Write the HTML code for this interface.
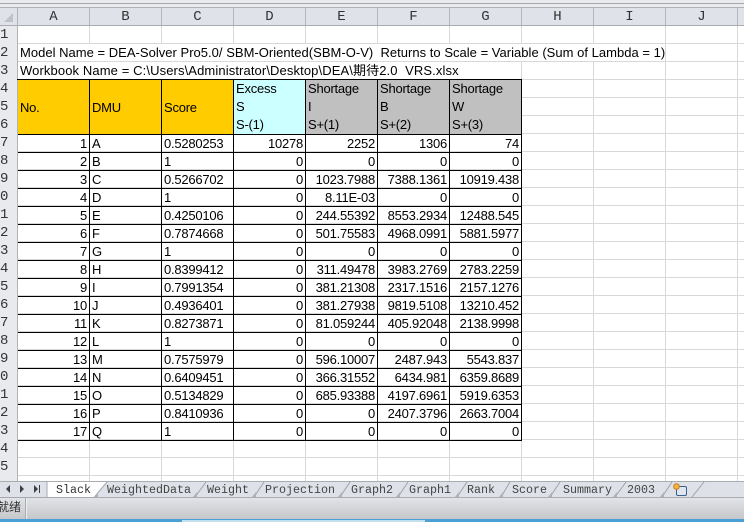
<!DOCTYPE html>
<html><head><meta charset="utf-8"><style>
html,body{margin:0;padding:0;width:744px;height:522px;overflow:hidden;background:#fff}
body{position:relative;font-family:"Liberation Sans","Noto Sans CJK SC",sans-serif;font-size:13px;color:#000}
div{position:absolute}
.ch{top:8px;height:17px;line-height:18px;width:71px;text-align:center;font-family:"Liberation Mono",monospace;font-size:14px;color:#333;border-right:1px solid #b4b8bc}
.rn{left:0;width:17px;height:18px;line-height:18px;font-family:"Liberation Mono",monospace;font-size:14px;color:#333;overflow:hidden}
.t{white-space:pre;left:18px;padding-left:2px;height:17px;line-height:18px;background:#fff;overflow:visible}
table{position:absolute;left:18px;top:80px;border-collapse:separate;border-spacing:0;table-layout:fixed;width:504px}
td{box-sizing:border-box;width:72px;height:18px;padding:0 2px;border-right:1px solid #000;border-bottom:1px solid #000;line-height:17px;white-space:nowrap;overflow:hidden;text-align:left;font-size:13px;letter-spacing:-.23px}
td.r{text-align:right}
.y{background:#fc0}.c{background:#cff}.g{background:#c0c0c0}
.h{height:54px;vertical-align:middle}
.m{vertical-align:top;line-height:18px}
.tb{top:482px;height:15px;line-height:16px;font-family:"Liberation Mono",monospace;font-size:11.67px;color:#444;white-space:pre}
svg{position:absolute}
</style></head><body>
<div style="left:0;top:0;width:744px;height:8px;background:#e9ebef"></div>
<div style="left:0;top:3px;width:744px;height:1px;background:#a8a8a8"></div>
<div style="left:0;top:7px;width:744px;height:1px;background:#aeb2b6"></div>
<div style="left:0;top:8px;width:744px;height:17px;background:#dfe2e8"></div>
<div style="left:0;top:25px;width:744px;height:1px;background:#a9adb2"></div>
<div style="left:0;top:26px;width:17px;height:455px;background:#e8eaee"></div>
<div style="left:17px;top:8px;width:1px;height:473px;background:#b0b4b8"></div>
<svg style="left:0;top:8px" width="17" height="17"><path d="M13 5V14H4Z" fill="#bfc3c6"/></svg>
<div style="left:18px;top:26px;width:726px;height:455px;background-image:linear-gradient(to right,transparent 71px,#d8d8d8 71px),linear-gradient(to bottom,transparent 17px,#d8d8d8 17px);background-size:72px 18px"></div>
<div class="ch" style="left:18px">A</div><div class="ch" style="left:90px">B</div><div class="ch" style="left:162px">C</div><div class="ch" style="left:234px">D</div><div class="ch" style="left:306px">E</div><div class="ch" style="left:378px">F</div><div class="ch" style="left:450px">G</div><div class="ch" style="left:522px">H</div><div class="ch" style="left:594px">I</div><div class="ch" style="left:666px">J</div><div class="ch" style="left:738px;width:6px;border:0"></div>
<div class="rn" style="top:26px">1</div><div class="rn" style="top:44px">2</div><div class="rn" style="top:62px">3</div><div class="rn" style="top:80px">4</div><div class="rn" style="top:98px">5</div><div class="rn" style="top:116px">6</div><div class="rn" style="top:134px">7</div><div class="rn" style="top:152px">8</div><div class="rn" style="top:170px">9</div><div class="rn" style="top:188px">0</div><div class="rn" style="top:206px">1</div><div class="rn" style="top:224px">2</div><div class="rn" style="top:242px">3</div><div class="rn" style="top:260px">4</div><div class="rn" style="top:278px">5</div><div class="rn" style="top:296px">6</div><div class="rn" style="top:314px">7</div><div class="rn" style="top:332px">8</div><div class="rn" style="top:350px">9</div><div class="rn" style="top:368px">0</div><div class="rn" style="top:386px">1</div><div class="rn" style="top:404px">2</div><div class="rn" style="top:422px">3</div><div class="rn" style="top:440px">4</div><div class="rn" style="top:458px">5</div>
<div class="t" style="top:44px;width:645px;letter-spacing:.02px">Model Name = DEA-Solver Pro5.0/ SBM-Oriented(SBM-O-V)  Returns to Scale = Variable (Sum of Lambda = 1)</div>
<div class="t" style="top:62px;width:500px;letter-spacing:.11px">Workbook Name = C:\Users\Administrator\Desktop\DEA\期待2.0  VRS.xlsx</div>
<div style="left:17px;top:79px;width:505px;height:1px;background:#000"></div>
<table>
<tr><td rowspan="3" class="y h">No.</td><td rowspan="3" class="y h">DMU</td><td rowspan="3" class="y h">Score</td><td rowspan="3" class="c h m">Excess<br>S<br>S-(1)</td><td rowspan="3" class="g h m">Shortage<br>I<br>S+(1)</td><td rowspan="3" class="g h m">Shortage<br>B<br>S+(2)</td><td rowspan="3" class="g h m">Shortage<br>W<br>S+(3)</td></tr>
<tr></tr><tr></tr>
<tr><td class="r">1</td><td>A</td><td>0.5280253</td><td class="r">10278</td><td class="r">2252</td><td class="r">1306</td><td class="r">74</td></tr>
<tr><td class="r">2</td><td>B</td><td>1</td><td class="r">0</td><td class="r">0</td><td class="r">0</td><td class="r">0</td></tr>
<tr><td class="r">3</td><td>C</td><td>0.5266702</td><td class="r">0</td><td class="r">1023.7988</td><td class="r">7388.1361</td><td class="r">10919.438</td></tr>
<tr><td class="r">4</td><td>D</td><td>1</td><td class="r">0</td><td class="r">8.11E-03</td><td class="r">0</td><td class="r">0</td></tr>
<tr><td class="r">5</td><td>E</td><td>0.4250106</td><td class="r">0</td><td class="r">244.55392</td><td class="r">8553.2934</td><td class="r">12488.545</td></tr>
<tr><td class="r">6</td><td>F</td><td>0.7874668</td><td class="r">0</td><td class="r">501.75583</td><td class="r">4968.0991</td><td class="r">5881.5977</td></tr>
<tr><td class="r">7</td><td>G</td><td>1</td><td class="r">0</td><td class="r">0</td><td class="r">0</td><td class="r">0</td></tr>
<tr><td class="r">8</td><td>H</td><td>0.8399412</td><td class="r">0</td><td class="r">311.49478</td><td class="r">3983.2769</td><td class="r">2783.2259</td></tr>
<tr><td class="r">9</td><td>I</td><td>0.7991354</td><td class="r">0</td><td class="r">381.21308</td><td class="r">2317.1516</td><td class="r">2157.1276</td></tr>
<tr><td class="r">10</td><td>J</td><td>0.4936401</td><td class="r">0</td><td class="r">381.27938</td><td class="r">9819.5108</td><td class="r">13210.452</td></tr>
<tr><td class="r">11</td><td>K</td><td>0.8273871</td><td class="r">0</td><td class="r">81.059244</td><td class="r">405.92048</td><td class="r">2138.9998</td></tr>
<tr><td class="r">12</td><td>L</td><td>1</td><td class="r">0</td><td class="r">0</td><td class="r">0</td><td class="r">0</td></tr>
<tr><td class="r">13</td><td>M</td><td>0.7575979</td><td class="r">0</td><td class="r">596.10007</td><td class="r">2487.943</td><td class="r">5543.837</td></tr>
<tr><td class="r">14</td><td>N</td><td>0.6409451</td><td class="r">0</td><td class="r">366.31552</td><td class="r">6434.981</td><td class="r">6359.8689</td></tr>
<tr><td class="r">15</td><td>O</td><td>0.5134829</td><td class="r">0</td><td class="r">685.93388</td><td class="r">4197.6961</td><td class="r">5919.6353</td></tr>
<tr><td class="r">16</td><td>P</td><td>0.8410936</td><td class="r">0</td><td class="r">0</td><td class="r">2407.3796</td><td class="r">2663.7004</td></tr>
<tr><td class="r">17</td><td>Q</td><td>1</td><td class="r">0</td><td class="r">0</td><td class="r">0</td><td class="r">0</td></tr>
</table>
<!-- tab strip -->
<div style="left:0;top:481px;width:744px;height:1px;background:#a9adb2"></div>
<div style="left:0;top:482px;width:744px;height:15px;background:#dee1e8"></div>
<div style="left:0;top:497px;width:744px;height:1px;background:#a9adb2"></div>
<svg style="left:0;top:481px" width="744" height="18" fill="none">
<path d="M47 1V16H94L107 1Z" fill="#fff"/>
<path d="M47 1V16.5H94L107 1" stroke="#a5a9ae"/>
<path d="M195 16L206 1M254 16L264 1M340 16L350 1M398 16L408 1M457 16L467 1M501 16L510 1M550 16L560 1M615 16L626 1M662 16L672 1M692 16L704 1" stroke="#9ea2a7"/>
<path d="M0 16.5H47" stroke="#a5a9ae"/>
<path d="M10 4V12L6 8Z M20 4V12L24 8Z M34 4V12L38 8Z" fill="#3c3f46"/><path d="M39.5 4V12" stroke="#3c3f46"/>
<path d="M94 16l4-5v5zM193 16l4-5v5zM252 16l4-5v5zM338 16l4-5v5zM396 16l4-5v5zM455 16l4-5v5zM499 16l4-5v5zM548 16l4-5v5zM613 16l4-5v5zM660 16l4-5v5z" fill="#aeb2b7"/>
<rect x="676.5" y="5.5" width="10" height="9" rx="1.5" fill="#dfe6f0" stroke="#3d5f8e"/>
<circle cx="676.5" cy="5.5" r="2.8" fill="#f6b73c" stroke="#c8791c"/>
</svg>
<div class="tb" style="left:56px;color:#333">Slack</div>
<div class="tb" style="left:107px">WeightedData</div>
<div class="tb" style="left:207px">Weight</div>
<div class="tb" style="left:265px">Projection</div>
<div class="tb" style="left:351px">Graph2</div>
<div class="tb" style="left:409px">Graph1</div>
<div class="tb" style="left:467px">Rank</div>
<div class="tb" style="left:512px">Score</div>
<div class="tb" style="left:563px">Summary</div>
<div class="tb" style="left:627px">2003</div>
<!-- status bar -->
<div style="left:0;top:498px;width:744px;height:21px;background:linear-gradient(#e1e3e8,#c5c7ca)"></div>
<div style="left:25px;top:498px;width:1px;height:21px;background:#a8abb0;box-shadow:1px 0 0 #eceef0"></div>
<div style="left:-3px;top:498px;height:19px;line-height:19px;font-size:12px;color:#333;white-space:pre">就绪</div>
<div style="left:0;top:519px;width:744px;height:3px;background:#4aa0d4"></div>
<div style="left:182px;top:520px;width:243px;height:2px;background:#c2e0ee"></div>
</body></html>
